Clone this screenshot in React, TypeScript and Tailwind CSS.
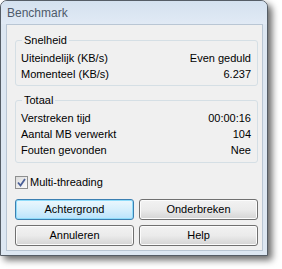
const snelheid = [
  { label: "Uiteindelijk (KB/s)", value: "Even geduld" },
  { label: "Momenteel (KB/s)", value: "6.237" },
]

const totaal = [
  { label: "Verstreken tijd", value: "00:00:16" },
  { label: "Aantal MB verwerkt", value: "104" },
  { label: "Fouten gevonden", value: "Nee" },
]

function GroupBox({ title, rows, bottom }: { title: string; rows: { label: string; value: string }[]; bottom: string }) {
  return (
    <fieldset className={`rounded-[3px] border border-[#d5dfe5] pl-[5px] pr-[6px] ${bottom}`}>
      <legend className="ml-[1px] px-[2px] leading-[13px]">{title}</legend>
      <div className="mt-[3px]">
        {rows.map((row) => (
          <div key={row.label} className="flex h-[16px] items-center justify-between">
            <span>{row.label}</span>
            <span>{row.value}</span>
          </div>
        ))}
      </div>
    </fieldset>
  )
}

function Button({ label, primary }: { label: string; primary?: boolean }) {
  return (
    <button
      className={
        primary
          ? "h-[21px] rounded-[3px] border border-[#3c7fb1] bg-gradient-to-b from-[#ecf7fd] via-[#d6effc] to-[#b9e3fc] shadow-[inset_0_0_0_1px_#8fdcfa]"
          : "h-[21px] rounded-[3px] border border-[#707070] bg-gradient-to-b from-[#f2f2f2] via-[#ebebeb] to-[#d4d4d4] shadow-[inset_0_0_0_1px_#fcfcfc]"
      }
    >
      {label}
    </button>
  )
}

export default function App() {
  return (
    <div className="h-[269px] w-[282px] bg-white font-['Liberation_Sans',Arial,sans-serif] text-[11px] text-black">
      <div className="flex h-[256px] w-[268px] flex-col rounded-t-[7px] border border-[#555d66] bg-[#dde7f2] shadow-[4px_4px_7px_rgba(0,0,0,0.6)]">
        <div className="flex h-[23px] items-center rounded-t-[6px] bg-gradient-to-b from-[#d4e1ef] to-[#e1eaf5] pl-[6px] text-[12px] text-[#4e5a6a]">
          Benchmark
        </div>
        <div className="mb-[4px] ml-[5px] mr-[4px] flex flex-1 flex-col border border-[#b9c6d4] bg-[#f0f0f0] pl-[8px] pr-[4px] pt-[9px]">
          <GroupBox title="Snelheid" rows={snelheid} bottom="pb-[3px]" />
          <div className="mt-[8px]">
            <GroupBox title="Totaal" rows={totaal} bottom="pb-[4px]" />
          </div>
          <div className="mt-[13px] flex h-[13px] items-center gap-[2px] leading-[13px]">
            <span className="flex h-[13px] w-[13px] items-center justify-center border border-[#8e8f8f] bg-gradient-to-br from-[#dcdcdc] to-[#fbfbfb]">
              <svg width="9" height="9" viewBox="0 0 9 9">
                <path d="M1 4.5 L3.5 7.5 L8 1" fill="none" stroke="#4a5f97" strokeWidth="1.8" />
              </svg>
            </span>
            <span>Multi-threading</span>
          </div>
          <div className="mt-[10px] grid grid-cols-2 gap-x-[5px] gap-y-[5px]">
            <Button label="Achtergrond" primary />
            <Button label="Onderbreken" />
            <Button label="Annuleren" />
            <Button label="Help" />
          </div>
        </div>
      </div>
    </div>
  )
}
